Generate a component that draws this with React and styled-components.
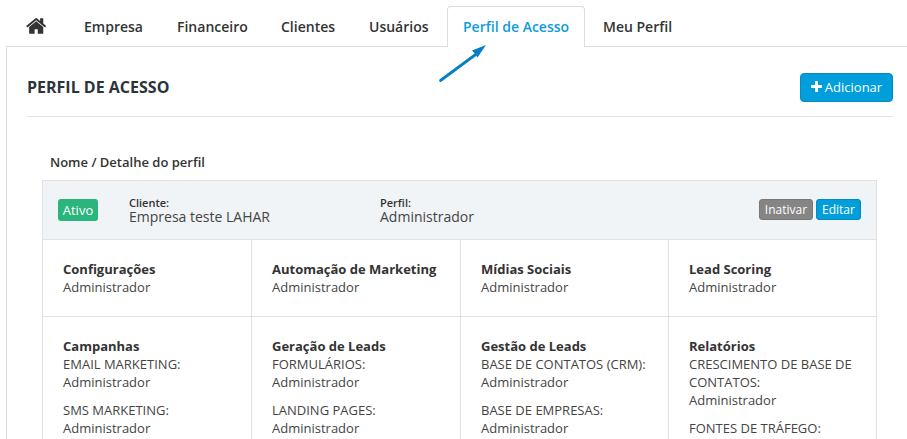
import styled, { createGlobalStyle } from "styled-components";

const GlobalStyle = createGlobalStyle`
  * {
    box-sizing: border-box;
  }

  body {
    margin: 0;
    overflow: hidden;
    background-color: #fff;
    color: #333;
    font-family: "Open Sans", "Noto Sans", sans-serif;
    font-size: 13px;
  }
`;

const Page = styled.div`
  position: relative;
  height: 439px;
  padding: 6px 0 0 6px;
  overflow: hidden;
`;

const Tabs = styled.nav`
  display: flex;
  gap: 2px;
  height: 41px;
  border-bottom: 1px solid #ddd;
`;

const Tab = styled.a`
  height: 41px;
  width: ${({ $width }) => $width}px;
  flex: none;
  display: flex;
  align-items: center;
  padding: 0 0 2px ${({ $icon }) => ($icon ? 19 : 15)}px;
  border: 1px solid ${({ $active }) => ($active ? "#ddd" : "transparent")};
  border-bottom: none;
  border-radius: 4px 4px 0 0;
  background-color: ${({ $active }) => ($active ? "#fff" : "transparent")};
  color: ${({ $active }) => ($active ? "#0e9cdb" : "#333")};
  font-size: 14px;
  font-weight: 600;
  white-space: nowrap;
  cursor: pointer;
`;

const Content = styled.main`
  height: 500px;
  padding: 26px 14px 0 20px;
  border-left: 1px solid #ddd;
`;

const Header = styled.header`
  display: flex;
  align-items: flex-start;
  justify-content: space-between;
  height: 44px;
  border-bottom: 1px solid #e2e2e2;
`;

const Title = styled.h1`
  margin: 2px 0 0;
  color: #2b333b;
  font-size: 16px;
  font-weight: 700;
  line-height: 24px;
`;

const AddButton = styled.button`
  display: flex;
  align-items: center;
  justify-content: center;
  gap: 3px;
  width: 93px;
  height: 29px;
  padding: 0 0 1px;
  border: 1px solid #0489c4;
  border-radius: 4px;
  background-color: #009fdc;
  color: #fff;
  font-family: inherit;
  font-size: 13px;
  cursor: pointer;
`;

const List = styled.section`
  margin: 33px 16px 0 15px;
`;

const ListTitle = styled.h2`
  height: 30px;
  margin: 0;
  padding-left: 8px;
  font-size: 13px;
  font-weight: 600;
  line-height: 25px;
`;

const Box = styled.div`
  border: 1px solid #e2e2e2;
  border-bottom: none;
`;

const Profile = styled.div`
  display: flex;
  height: 58px;
  padding: 18px 15px 0;
  background-color: #f0f4f7;
`;

const Status = styled.span`
  width: 40px;
  height: 22px;
  margin-right: 31px;
  border-radius: 3px;
  background-color: #2ab57d;
  color: #fff;
  font-size: 13px;
  line-height: 22px;
  text-align: center;
`;

const Info = styled.div`
  width: 251px;
  margin-top: -3px;
  color: #444;
  font-size: 14px;
  line-height: 14px;
`;

const Label = styled.div`
  color: #333;
  font-size: 11px;
  font-weight: 600;
`;

const Actions = styled.div`
  display: flex;
  gap: 3px;
  margin-left: auto;
`;

const Action = styled.button`
  width: ${({ $width }) => $width}px;
  height: 21px;
  padding: 0;
  border: 1px solid ${({ $primary }) => ($primary ? "#0489c4" : "#777")};
  border-radius: 3px;
  background-color: ${({ $primary }) => ($primary ? "#009fdc" : "#858585")};
  color: #fff;
  font-family: inherit;
  font-size: 12px;
  line-height: 19px;
  cursor: pointer;
`;

const Grid = styled.div`
  display: grid;
  grid-template-columns: 209px 209px 208px 207px;
  grid-template-rows: 77px 200px;
`;

const Cell = styled.div`
  padding: 20px 15px 0 20px;
  border-top: 1px solid #e2e2e2;
  border-right: 1px solid #e2e2e2;
  color: #444;
  font-size: 13px;
  line-height: 18px;

  &:nth-child(4n) {
    border-right: none;
  }
`;

const CellTitle = styled.h3`
  margin: 0;
  color: #333;
  font-size: 13px;
  font-weight: 700;
`;

const Access = styled.p`
  margin: 0 0 10px;
`;

const Arrow = styled.svg`
  position: absolute;
  left: 436px;
  top: 42px;
`;

const tabs = [
  { name: "Empresa", width: 91 },
  { name: "Financeiro", width: 102 },
  { name: "Clientes", width: 86 },
  { name: "Usuários", width: 92 },
  { name: "Perfil de Acesso", width: 138, active: true },
  { name: "Meu Perfil", width: 101 },
];

const modules = [
  { title: "Configurações", items: [""] },
  { title: "Automação de Marketing", items: [""] },
  { title: "Mídias Sociais", items: [""] },
  { title: "Lead Scoring", items: [""] },
  { title: "Campanhas", items: ["EMAIL MARKETING:", "SMS MARKETING:"] },
  { title: "Geração de Leads", items: ["FORMULÁRIOS:", "LANDING PAGES:"] },
  { title: "Gestão de Leads", items: ["BASE DE CONTATOS (CRM):", "BASE DE EMPRESAS:"] },
  { title: "Relatórios", items: ["CRESCIMENTO DE BASE DE CONTATOS:", "FONTES DE TRÁFEGO:"] },
];

const HomeIcon = () => (
  <svg width="20.4" height="22" viewBox="0 0 1664 1792" fill="#333">
    <path d="M1408 992v480q0 26-19 45t-45 19h-384v-384h-256v384h-384q-26 0-45-19t-19-45v-480q0-1 .5-3t.5-3l575-474 575 474q1 2 1 6zm223-69l-62 74q-8 9-21 11h-3q-13 0-21-7l-692-577-692 577q-12 8-24 7-13-2-21-11l-62-74q-8-10-7-23.5t11-21.5l719-599q32-26 76-26t76 26l244 204v-195q0-14 9-23t23-9h192q14 0 23 9t9 23v408l219 182q10 8 11 21.5t-7 23.5z" />
  </svg>
);

const PlusIcon = () => (
  <svg width="11" height="14" viewBox="0 0 1408 1792" fill="#fff">
    <path d="M1408 736v192q0 40-28 68t-68 28h-416v416q0 40-28 68t-68 28h-192q-40 0-68-28t-28-68v-416h-416q-40 0-68-28t-28-68v-192q0-40 28-68t68-28h416v-416q0-40 28-68t68-28h192q40 0 68 28t28 68v416h416q40 0 68 28t28 68z" />
  </svg>
);

const App = () => {
  return (
    <Page>
      <GlobalStyle />
      <Tabs>
        <Tab $width={60} $icon>
          <HomeIcon />
        </Tab>
        {tabs.map((tab) => (
          <Tab key={tab.name} $width={tab.width} $active={tab.active}>{tab.name}</Tab>
        ))}
      </Tabs>
      <Content>
        <Header>
          <Title>PERFIL DE ACESSO</Title>
          <AddButton><PlusIcon />Adicionar</AddButton>
        </Header>
        <List>
          <ListTitle>Nome / Detalhe do perfil</ListTitle>
          <Box>
            <Profile>
              <Status>Ativo</Status>
              <Info>
                <Label>Cliente:</Label>
                Empresa teste LAHAR
              </Info>
              <Info>
                <Label>Perfil:</Label>
                Administrador
              </Info>
              <Actions>
                <Action $width={54}>Inativar</Action>
                <Action $width={45} $primary>Editar</Action>
              </Actions>
            </Profile>
            <Grid>
              {modules.map((module) => (
                <Cell key={module.title}>
                  <CellTitle>{module.title}</CellTitle>
                  {module.items.map((item) => (
                    <Access key={item}>
                      {item && <>{item}<br /></>}
                      Administrador
                    </Access>
                  ))}
                </Cell>
              ))}
            </Grid>
          </Box>
        </List>
      </Content>
      <Arrow width="54" height="44" viewBox="0 0 54 44">
        <path d="M4.5 38.5L39 13" fill="none" stroke="#0580c2" strokeWidth="2.8" strokeLinecap="round" />
        <path d="M50 3L36 8.5L39 12L41.5 15.5Z" fill="#0580c2" />
      </Arrow>
    </Page>
  );
};

export default App;
